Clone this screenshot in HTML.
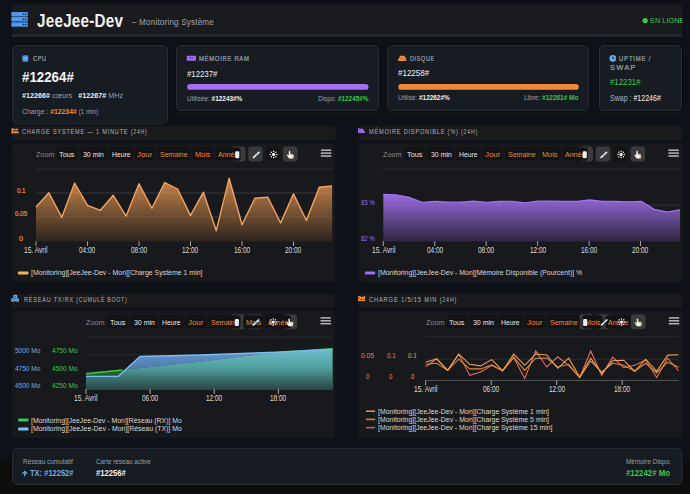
<!DOCTYPE html>
<html><head><meta charset="utf-8"><style>
html,body{margin:0;padding:0;}
html{background:#0e0d0c;}
body{width:690px;height:494px;position:relative;overflow:hidden;font-family:"Liberation Sans", sans-serif;background:linear-gradient(#0e1118 0,#0e1118 461px,#0e0d0c 461px);}
svg{position:absolute;left:0;top:0;}
.t{position:absolute;white-space:nowrap;line-height:12px;transform-origin:0 50%;}
b{font-weight:700;}
</style></head><body>
<svg width="690" height="494" viewBox="0 0 690 494">
<rect x="12" y="4.6" width="670.5" height="31.4" rx="4" fill="#1a1b1e" />
<rect x="12" y="34.6" width="670.5" height="2.0" rx="0" fill="#2a2d33" />
<rect x="176.5" y="105" width="202" height="10" rx="4.5" fill="#141519"/>
<rect x="387.5" y="105" width="201" height="10" rx="4.5" fill="#141519"/>
<rect x="599.5" y="105" width="82" height="10" rx="4.5" fill="#141519"/>
<rect x="11.5" y="44.5" width="157" height="80.5" rx="5.5" fill="none" stroke="#0a0c10" stroke-width="1"/>
<rect x="12.5" y="45.5" width="155" height="78.5" rx="4.5" fill="#171b22" stroke="#292d35" stroke-width="1"/>
<rect x="175.5" y="44.5" width="204" height="67" rx="5.5" fill="none" stroke="#0a0c10" stroke-width="1"/>
<rect x="176.5" y="45.5" width="202" height="65" rx="4.5" fill="#171b22" stroke="#292d35" stroke-width="1"/>
<rect x="386.5" y="44.5" width="203" height="67" rx="5.5" fill="none" stroke="#0a0c10" stroke-width="1"/>
<rect x="387.5" y="45.5" width="201" height="65" rx="4.5" fill="#171b22" stroke="#292d35" stroke-width="1"/>
<rect x="598.5" y="44.5" width="84" height="67" rx="5.5" fill="none" stroke="#0a0c10" stroke-width="1"/>
<rect x="599.5" y="45.5" width="82" height="65" rx="4.5" fill="#171b22" stroke="#292d35" stroke-width="1"/>
<rect x="12" y="126" width="323.5" height="14.300000000000011" rx="3" fill="#1a1a1d" />
<rect x="358.3" y="126" width="323.99999999999994" height="14.300000000000011" rx="3" fill="#1a1a1d" />
<rect x="12" y="293.8" width="323.3" height="14.199999999999989" rx="3" fill="#1a1a1d" />
<rect x="358.3" y="293.8" width="323.99999999999994" height="14.199999999999989" rx="3" fill="#1a1a1d" />
<rect x="12" y="143.4" width="323.3" height="138.70000000000002" rx="4" fill="#18191c" />
<rect x="358.6" y="143.6" width="323.9" height="138.70000000000002" rx="4" fill="#18191c" />
<rect x="12" y="310.6" width="323" height="127.69999999999999" rx="4" fill="#18191c" />
<rect x="358.3" y="311" width="324.40000000000003" height="127.60000000000002" rx="4" fill="#18191c" />
<rect x="11.5" y="447.5" width="671" height="37.5" rx="5.5" fill="none" stroke="#0a0c10" stroke-width="1"/>
<rect x="12.5" y="448.3" width="669.5" height="36.2" rx="4.5" fill="#171b22" stroke="#292d35" stroke-width="1"/>
<rect x="11.3" y="12.0" width="16.6" height="4.4" rx="0.8" fill="#4b94ea"/>
<rect x="12.2" y="13.7" width="9" height="0.7" fill="#7fb6f5" opacity="0.6"/>
<circle cx="23.6" cy="14.2" r="0.8" fill="#10233d"/>
<circle cx="25.8" cy="14.2" r="0.8" fill="#10233d"/>
<rect x="11.3" y="17.1" width="16.6" height="4.4" rx="0.8" fill="#4b94ea"/>
<rect x="12.2" y="18.8" width="9" height="0.7" fill="#7fb6f5" opacity="0.6"/>
<circle cx="23.6" cy="19.3" r="0.8" fill="#10233d"/>
<circle cx="25.8" cy="19.3" r="0.8" fill="#10233d"/>
<rect x="11.3" y="22.3" width="16.6" height="4.4" rx="0.8" fill="#4b94ea"/>
<rect x="12.2" y="24.0" width="9" height="0.7" fill="#7fb6f5" opacity="0.6"/>
<circle cx="23.6" cy="24.5" r="0.8" fill="#10233d"/>
<circle cx="25.8" cy="24.5" r="0.8" fill="#10233d"/>
<circle cx="645.2" cy="20.6" r="2.6" fill="#3ec84e"/>
<rect x="22.2" y="55.3" width="6.2" height="6.4" rx="1.6" fill="#4b94ea"/>
<rect x="23.8" y="57" width="3" height="3" fill="#8cbcf3" opacity="0.5"/>
<rect x="186.8" y="55.8" width="9.1" height="5" rx="0.5" fill="#a46ef0"/>
<rect x="188.8" y="57.3" width="5" height="1.2" fill="#5a3aa8" opacity="0.8"/>
<rect x="187.2" y="84" width="181.3" height="5.8" rx="2.9" fill="#a46ef0"/>
<path d="M400.2 55.8 H404.4 L406.3 59.2 V61 H398.2 V59.2 Z" fill="#f08a3a"/>
<rect x="399.4" y="58.4" width="5.6" height="0.8" fill="#a05a20" opacity="0.6"/>
<rect x="398.3" y="84" width="180.5" height="5.8" rx="2.9" fill="#f08a3a"/>
<circle cx="612.8" cy="58.4" r="3.3" fill="#6ab0f0"/>
<path d="M612.8 56.3 V58.6 H614.4" stroke="#10233d" stroke-width="0.9" fill="none"/>
<rect x="11.5" y="128.2" width="1.6" height="5.2" fill="#f08a3a"/>
<rect x="11.5" y="132.2" width="7.3" height="1.2" fill="#f08a3a"/>
<path d="M13.1 128.6 H14.1 L15.0 129.6 L16.1 128.5 L18.3 129.0 V130.29999999999998 H13.1 Z" fill="#f08a3a"/>
<rect x="13.1" y="131.1" width="5.2" height="1.1" fill="#f08a3a"/>
<rect x="358" y="128" width="1.3" height="5.1" fill="#9a6ae8"/>
<path d="M359.2 133.1 V128.5 L360.6 128.9 L361.9 128.3 L363.2 129.6 L364.1 130.2 L365.2 133.1 Z" fill="#9a6ae8"/>
<rect x="13.4" y="294.8" width="3.8" height="3.5" rx="1" fill="#6ab0f0"/>
<circle cx="15.3" cy="296.6" r="0.6" fill="#1a2a40"/>
<rect x="11.1" y="298.2" width="3.8" height="3.5" rx="1" fill="#6ab0f0"/>
<circle cx="13.0" cy="300.0" r="0.6" fill="#1a2a40"/>
<rect x="15.2" y="298.2" width="3.8" height="3.5" rx="1" fill="#6ab0f0"/>
<circle cx="17.099999999999998" cy="300.0" r="0.6" fill="#1a2a40"/>
<rect x="358.2" y="295.9" width="1.6" height="5.2" fill="#f08a3a"/>
<rect x="358.2" y="299.9" width="7.3" height="1.2" fill="#f08a3a"/>
<path d="M359.8 295.9 H360.7 V297.2 L361.9 296.7 H362.8 V297.4 L363.9 296.09999999999997 H365.0 V299.4 H359.8 Z" fill="#f08a3a"/>
<rect x="230.9" y="146.6" width="14.599999999999994" height="15.0" rx="3" fill="#3a3a3d" />
<rect x="248.2" y="146.6" width="14.600000000000023" height="15.0" rx="3" fill="#3a3a3d" />
<rect x="266" y="146.6" width="13.5" height="15.0" rx="3" fill="#141417" />
<rect x="283" y="146.6" width="14.600000000000023" height="15.0" rx="3" fill="#3a3a3d" />
<rect x="56.9" y="147.5" width="20.1" height="13.300000000000011" rx="3" fill="#131316" />
<rect x="81" y="147.5" width="25.5" height="13.300000000000011" rx="3" fill="#131316" />
<rect x="109.3" y="147.5" width="23.10000000000001" height="13.300000000000011" rx="3" fill="#131316" />
<rect x="135" y="147.5" width="20" height="13.300000000000011" rx="3" fill="#131316" />
<rect x="157.8" y="147.5" width="32.19999999999999" height="13.300000000000011" rx="3" fill="#131316" />
<rect x="192.7" y="147.5" width="20.100000000000023" height="13.300000000000011" rx="3" fill="#131316" />
<rect x="215.6" y="147.5" width="24.900000000000006" height="13.300000000000011" rx="3" fill="#131316" />
<rect x="578.4" y="146.6" width="14.600000000000023" height="15.0" rx="3" fill="#3a3a3d" />
<rect x="595.7" y="146.6" width="14.599999999999909" height="15.0" rx="3" fill="#3a3a3d" />
<rect x="613.5" y="146.6" width="13.5" height="15.0" rx="3" fill="#141417" />
<rect x="630.5" y="146.6" width="14.600000000000023" height="15.0" rx="3" fill="#3a3a3d" />
<rect x="404.29999999999995" y="147.5" width="20.100000000000023" height="13.300000000000011" rx="3" fill="#131316" />
<rect x="428.4" y="147.5" width="25.5" height="13.300000000000011" rx="3" fill="#131316" />
<rect x="456.7" y="147.5" width="23.099999999999966" height="13.300000000000011" rx="3" fill="#131316" />
<rect x="482.4" y="147.5" width="20.0" height="13.300000000000011" rx="3" fill="#131316" />
<rect x="505.2" y="147.5" width="32.19999999999999" height="13.300000000000011" rx="3" fill="#131316" />
<rect x="540.0999999999999" y="147.5" width="20.100000000000136" height="13.300000000000011" rx="3" fill="#131316" />
<rect x="563.0" y="147.5" width="24.899999999999977" height="13.300000000000011" rx="3" fill="#131316" />
<rect x="230.50000000000003" y="314.29999999999995" width="14.599999999999994" height="15.0" rx="3" fill="#3a3a3d" />
<rect x="247.8" y="314.29999999999995" width="14.600000000000023" height="15.0" rx="3" fill="#3a3a3d" />
<rect x="265.6" y="314.29999999999995" width="13.5" height="15.0" rx="3" fill="#141417" />
<rect x="282.6" y="314.29999999999995" width="14.600000000000023" height="15.0" rx="3" fill="#3a3a3d" />
<rect x="107.4" y="315.2" width="20.099999999999994" height="13.300000000000011" rx="3" fill="#131316" />
<rect x="131.5" y="315.2" width="25.5" height="13.300000000000011" rx="3" fill="#131316" />
<rect x="159.8" y="315.2" width="23.099999999999994" height="13.300000000000011" rx="3" fill="#131316" />
<rect x="185.5" y="315.2" width="20.0" height="13.300000000000011" rx="3" fill="#131316" />
<rect x="208.3" y="315.2" width="32.19999999999999" height="13.300000000000011" rx="3" fill="#131316" />
<rect x="243.2" y="315.2" width="20.100000000000023" height="13.300000000000011" rx="3" fill="#131316" />
<rect x="266.1" y="315.2" width="24.899999999999977" height="13.300000000000011" rx="3" fill="#131316" />
<rect x="578.8" y="314.29999999999995" width="14.600000000000023" height="15.0" rx="3" fill="#3a3a3d" />
<rect x="596.0999999999999" y="314.29999999999995" width="14.600000000000136" height="15.0" rx="3" fill="#3a3a3d" />
<rect x="613.9" y="314.29999999999995" width="13.5" height="15.0" rx="3" fill="#141417" />
<rect x="630.9" y="314.29999999999995" width="14.600000000000023" height="15.0" rx="3" fill="#3a3a3d" />
<rect x="446.7" y="315.2" width="20.100000000000023" height="13.300000000000011" rx="3" fill="#131316" />
<rect x="470.8" y="315.2" width="25.5" height="13.300000000000011" rx="3" fill="#131316" />
<rect x="499.1" y="315.2" width="23.100000000000023" height="13.300000000000011" rx="3" fill="#131316" />
<rect x="524.8" y="315.2" width="20.0" height="13.300000000000011" rx="3" fill="#131316" />
<rect x="547.6" y="315.2" width="32.19999999999993" height="13.300000000000011" rx="3" fill="#131316" />
<rect x="582.5" y="315.2" width="20.100000000000023" height="13.300000000000011" rx="3" fill="#131316" />
<rect x="605.4" y="315.2" width="24.899999999999977" height="13.300000000000011" rx="3" fill="#131316" />
<defs><linearGradient id="gOr" gradientUnits="userSpaceOnUse" x1="0" y1="172" x2="0" y2="241.4"><stop offset="0" stop-color="#dc9252"/><stop offset="1" stop-color="#2c231d"/></linearGradient><linearGradient id="gPu" x1="0" y1="0" x2="0" y2="1"><stop offset="0" stop-color="#9a6ae0"/><stop offset="1" stop-color="#2f2540"/></linearGradient><linearGradient id="gBl" gradientUnits="userSpaceOnUse" x1="0" y1="348" x2="0" y2="389"><stop offset="0" stop-color="#78b8f0"/><stop offset="1" stop-color="#3a5a78"/></linearGradient><linearGradient id="gGr" gradientUnits="userSpaceOnUse" x1="0" y1="348" x2="0" y2="389"><stop offset="0" stop-color="#42b85a"/><stop offset="1" stop-color="#22402a"/></linearGradient></defs>
<line x1="36" y1="169" x2="332.6" y2="169" stroke="#2b2b30" stroke-width="1"/>
<line x1="36" y1="193" x2="332.6" y2="193" stroke="#2b2b30" stroke-width="1"/>
<line x1="36" y1="217" x2="332.6" y2="217" stroke="#2b2b30" stroke-width="1"/>
<polygon points="36.00,207.00 48.88,192.80 61.75,217.40 74.62,183.00 87.50,205.40 100.38,210.30 113.25,195.30 126.12,216.20 139.00,183.70 151.88,208.30 164.75,182.50 177.62,189.00 190.50,215.60 203.38,192.20 216.25,230.80 229.12,178.10 242.00,224.70 254.88,198.30 267.75,197.10 280.62,223.00 293.50,193.90 306.38,220.50 319.25,187.20 332.12,186.00 332.1,241.4 36,241.4" fill="url(#gOr)"/>
<line x1="36" y1="193" x2="332.6" y2="193" stroke="#ffffff" stroke-opacity="0.07" stroke-width="1"/>
<line x1="36" y1="217" x2="332.6" y2="217" stroke="#ffffff" stroke-opacity="0.07" stroke-width="1"/>
<polyline points="36.00,207.00 48.88,192.80 61.75,217.40 74.62,183.00 87.50,205.40 100.38,210.30 113.25,195.30 126.12,216.20 139.00,183.70 151.88,208.30 164.75,182.50 177.62,189.00 190.50,215.60 203.38,192.20 216.25,230.80 229.12,178.10 242.00,224.70 254.88,198.30 267.75,197.10 280.62,223.00 293.50,193.90 306.38,220.50 319.25,187.20 332.12,186.00" fill="none" stroke="#f2a362" stroke-width="1.4" stroke-linejoin="round"/>
<line x1="36.0" y1="241.4" x2="36.0" y2="246" stroke="#c8c8c8" stroke-width="0.8"/>
<line x1="87.5" y1="241.4" x2="87.5" y2="246" stroke="#c8c8c8" stroke-width="0.8"/>
<line x1="139.0" y1="241.4" x2="139.0" y2="246" stroke="#c8c8c8" stroke-width="0.8"/>
<line x1="190.5" y1="241.4" x2="190.5" y2="246" stroke="#c8c8c8" stroke-width="0.8"/>
<line x1="242.0" y1="241.4" x2="242.0" y2="246" stroke="#c8c8c8" stroke-width="0.8"/>
<line x1="293.5" y1="241.4" x2="293.5" y2="246" stroke="#c8c8c8" stroke-width="0.8"/>
<rect x="17.9" y="271.6" width="10.6" height="2.8" rx="1" fill="#f2b060"/>
<line x1="383.3" y1="169" x2="680" y2="169" stroke="#2b2b30" stroke-width="1"/>
<line x1="383.3" y1="205.2" x2="680" y2="205.2" stroke="#2b2b30" stroke-width="1"/>
<polygon points="383.30,194.30 396.20,194.80 409.10,197.30 422.00,202.30 434.90,201.30 447.80,202.10 460.70,202.10 473.60,201.10 486.50,202.30 499.40,201.30 512.30,201.30 525.20,202.80 538.10,201.10 551.00,201.10 563.90,201.50 576.80,201.50 589.70,200.00 602.60,201.50 615.50,201.50 628.40,201.80 641.30,201.30 654.20,209.30 667.10,212.10 680.00,209.80 680,241.6 383.3,241.6" fill="url(#gPu)"/>
<line x1="383.3" y1="205.2" x2="680" y2="205.2" stroke="#ffffff" stroke-opacity="0.05" stroke-width="1"/>
<polyline points="383.30,194.30 396.20,194.80 409.10,197.30 422.00,202.30 434.90,201.30 447.80,202.10 460.70,202.10 473.60,201.10 486.50,202.30 499.40,201.30 512.30,201.30 525.20,202.80 538.10,201.10 551.00,201.10 563.90,201.50 576.80,201.50 589.70,200.00 602.60,201.50 615.50,201.50 628.40,201.80 641.30,201.30 654.20,209.30 667.10,212.10 680.00,209.80" fill="none" stroke="#a070f0" stroke-width="1.3"/>
<line x1="383.3" y1="241.2" x2="383.3" y2="246" stroke="#c8c8c8" stroke-width="0.8"/>
<line x1="434.75" y1="241.2" x2="434.75" y2="246" stroke="#c8c8c8" stroke-width="0.8"/>
<line x1="486.20000000000005" y1="241.2" x2="486.20000000000005" y2="246" stroke="#c8c8c8" stroke-width="0.8"/>
<line x1="537.6500000000001" y1="241.2" x2="537.6500000000001" y2="246" stroke="#c8c8c8" stroke-width="0.8"/>
<line x1="589.1" y1="241.2" x2="589.1" y2="246" stroke="#c8c8c8" stroke-width="0.8"/>
<line x1="640.55" y1="241.2" x2="640.55" y2="246" stroke="#c8c8c8" stroke-width="0.8"/>
<rect x="364.9" y="271.6" width="10.3" height="2.8" rx="1" fill="#a070f0"/>
<line x1="86" y1="337.2" x2="332.6" y2="337.2" stroke="#2b2b30" stroke-width="1"/>
<line x1="86" y1="354.8" x2="332.6" y2="354.8" stroke="#2b2b30" stroke-width="1"/>
<line x1="86" y1="371.8" x2="332.6" y2="371.8" stroke="#2b2b30" stroke-width="1"/>
<defs><clipPath id="cTX"><polygon points="86.00,376.40 118.40,376.20 140.00,356.50 200.00,355.00 277.00,352.20 332.60,349.40 332.6,389.4 86,389.4"/></clipPath><linearGradient id="gTeal" gradientUnits="userSpaceOnUse" x1="0" y1="349" x2="0" y2="389.4"><stop offset="0" stop-color="#6cbccc"/><stop offset="0.45" stop-color="#52a0a0"/><stop offset="1" stop-color="#2a4644"/></linearGradient><linearGradient id="gBlue2" gradientUnits="userSpaceOnUse" x1="0" y1="349" x2="0" y2="389.4"><stop offset="0" stop-color="#6698d4"/><stop offset="1" stop-color="#3a5a80"/></linearGradient></defs>
<polygon points="86.00,376.40 118.40,376.20 140.00,356.50 200.00,355.00 277.00,352.20 332.60,349.40 332.6,389.4 86,389.4" fill="url(#gBlue2)"/>
<polygon points="86.00,373.70 122.50,369.90 200.00,361.70 277.00,352.30 332.60,348.60 332.6,389.4 86,389.4" fill="#25602a"/>
<polygon points="86.00,373.70 122.50,369.90 200.00,361.70 277.00,352.30 332.60,348.60 332.6,389.4 86,389.4" fill="url(#gTeal)" clip-path="url(#cTX)"/>
<polyline points="86,373.7 122.5,369.9" fill="none" stroke="#3ec84e" stroke-width="1.5"/>
<polyline points="277,352.3 332.6,348.6" fill="none" stroke="#3ec84e" stroke-width="1.2"/>
<polyline points="86.00,376.40 118.40,376.20 140.00,356.50 200.00,355.00 277.00,352.20 332.60,349.40" fill="none" stroke="#7cbcf4" stroke-width="1.4"/>
<line x1="86.0" y1="389.1" x2="86.0" y2="394" stroke="#c8c8c8" stroke-width="0.8"/>
<line x1="150.13" y1="389.1" x2="150.13" y2="394" stroke="#c8c8c8" stroke-width="0.8"/>
<line x1="214.26" y1="389.1" x2="214.26" y2="394" stroke="#c8c8c8" stroke-width="0.8"/>
<line x1="278.39" y1="389.1" x2="278.39" y2="394" stroke="#c8c8c8" stroke-width="0.8"/>
<rect x="18.1" y="418.6" width="10.4" height="2.8" rx="1" fill="#3ec84e"/>
<rect x="18.1" y="427.6" width="10.4" height="2.8" rx="1" fill="#7ac0f8"/>
<line x1="425.7" y1="336.8" x2="678.7" y2="336.8" stroke="#2b2b30" stroke-width="1"/>
<line x1="425.7" y1="359.2" x2="678.7" y2="359.2" stroke="#2b2b30" stroke-width="1"/>
<line x1="425.7" y1="380.4" x2="678.7" y2="380.4" stroke="#55555a" stroke-width="1"/>
<polyline points="425.70,366.90 436.70,358.80 447.70,370.40 458.70,354.10 469.70,375.40 480.70,372.00 491.70,365.30 502.70,370.70 513.70,357.60 524.70,378.50 535.70,351.00 546.70,367.00 557.70,356.80 568.70,365.30 579.70,377.50 590.70,351.00 601.70,375.40 612.70,357.20 623.70,367.70 634.70,365.30 645.70,360.00 656.70,377.50 667.70,358.20 678.70,371.00" fill="none" stroke="#e0705e" stroke-width="1.1"/>
<polyline points="425.70,364.30 436.70,363.30 447.70,370.40 458.70,359.20 469.70,368.90 480.70,368.90 491.70,364.90 502.70,370.70 513.70,357.20 524.70,370.40 535.70,358.20 546.70,358.00 557.70,367.00 568.70,364.30 579.70,377.50 590.70,361.00 601.70,372.00 612.70,363.30 623.70,365.30 634.70,371.00 645.70,363.30 656.70,373.00 667.70,362.20 678.70,367.30" fill="none" stroke="#e0893a" stroke-width="1.1"/>
<polyline points="425.70,362.20 436.70,358.80 447.70,370.40 458.70,354.10 469.70,364.30 480.70,365.90 491.70,359.60 502.70,370.70 513.70,354.10 524.70,365.30 535.70,354.00 546.70,355.00 557.70,368.30 568.70,358.20 579.70,377.00 590.70,358.20 601.70,373.40 612.70,360.80 623.70,360.20 634.70,371.40 645.70,359.20 656.70,371.40 667.70,355.10 678.70,354.70" fill="none" stroke="#f0a050" stroke-width="1.1"/>
<line x1="425.7" y1="380.4" x2="425.7" y2="385" stroke="#c8c8c8" stroke-width="0.8"/>
<line x1="491.2" y1="380.4" x2="491.2" y2="385" stroke="#c8c8c8" stroke-width="0.8"/>
<line x1="556.7" y1="380.4" x2="556.7" y2="385" stroke="#c8c8c8" stroke-width="0.8"/>
<line x1="622.2" y1="380.4" x2="622.2" y2="385" stroke="#c8c8c8" stroke-width="0.8"/>
<rect x="366" y="410.4" width="9.2" height="1.6" fill="#d8944a"/>
<rect x="366" y="418.59999999999997" width="9.2" height="1.6" fill="#d8862e"/>
<rect x="366" y="426.8" width="9.2" height="1.6" fill="#b8605a"/>
<path d="M21.9 473.6 L24.8 470.4 L27.7 473.6 L26.9 474.3 L25.5 472.8 V476.2 H24.1 V472.8 L22.7 474.3 Z" fill="#6ab0f0"/>
</svg>
<span class="t" id="t0" style="left:37.20px;top:14.95px;font-size:18px;font-weight:700;color:#f2f2f2;transform:scaleX(0.8453);letter-spacing:0.3px">JeeJee-Dev</span>
<span class="t" id="t1" style="left:132.00px;top:16.24px;font-size:9.6px;font-weight:400;color:#a0a4ac;transform:scaleX(0.8473);letter-spacing:0.2px">– Monitoring Système</span>
<span class="t" id="t2" style="left:649.80px;top:14.87px;font-size:8px;font-weight:400;color:#3ec84e;transform:scaleX(0.9212);">EN LIGNE</span>
<span class="t" id="t3" style="left:32.70px;top:53.11px;font-size:7px;font-weight:400;color:#9aa0a8;transform:scaleX(0.7971);-webkit-text-stroke:0.22px #9aa0a8;letter-spacing:0.8px">CPU</span>
<span class="t" id="t4" style="left:22.00px;top:71.22px;font-size:14px;font-weight:700;color:#f4f4f4;transform:scaleX(0.9502);">#12264#</span>
<span class="t" id="t5" style="left:22.00px;top:89.99px;font-size:7.5px;font-weight:400;color:#9aa0a8;transform:scaleX(0.9573);"><b style="color:#f0f0f0">#12266#</b> cœurs &nbsp; <b style="color:#f0f0f0">#12267#</b> MHz</span>
<span class="t" id="t6" style="left:22.00px;top:106.10px;font-size:7.5px;font-weight:400;color:#9aa0a8;transform:scaleX(0.9122);">Charge : <b style="color:#f08a3a">#12234#</b> <span style="font-size:6.8px">(1 min)</span></span>
<span class="t" id="t7" style="left:199.30px;top:53.11px;font-size:7px;font-weight:400;color:#9aa0a8;transform:scaleX(0.8469);-webkit-text-stroke:0.22px #9aa0a8;letter-spacing:0.8px">MÉMOIRE RAM</span>
<span class="t" id="t8" style="left:187.20px;top:67.53px;font-size:9px;font-weight:400;color:#f0f0f0;transform:scaleX(0.8646);">#12237#</span>
<span class="t" id="t9" style="left:187.20px;top:92.51px;font-size:7px;font-weight:400;color:#9aa0a8;transform:scaleX(0.9167);">Utilisée: <b style="color:#f4f4f4">#12243#%</b></span>
<span class="t" id="t10" style="left:318.00px;top:92.51px;font-size:7px;font-weight:400;color:#9aa0a8;transform:scaleX(0.9135);">Dispo: <b style="color:#3ec84e">#12245#%</b></span>
<span class="t" id="t11" style="left:410.20px;top:53.11px;font-size:7px;font-weight:400;color:#9aa0a8;transform:scaleX(0.7838);-webkit-text-stroke:0.22px #9aa0a8;letter-spacing:0.8px">DISQUE</span>
<span class="t" id="t12" style="left:398.30px;top:67.23px;font-size:9px;font-weight:400;color:#f0f0f0;transform:scaleX(0.8902);">#12258#</span>
<span class="t" id="t13" style="left:398.30px;top:92.32px;font-size:7px;font-weight:400;color:#9aa0a8;transform:scaleX(0.9161);">Utilisé: <b style="color:#f4f4f4">#12262#%</b></span>
<span class="t" id="t14" style="left:524.30px;top:92.32px;font-size:7px;font-weight:400;color:#9aa0a8;transform:scaleX(0.9272);">Libre: <b style="color:#3ec84e">#12261# Mo</b></span>
<span class="t" id="t15" style="left:619.30px;top:53.21px;font-size:7px;font-weight:400;color:#9aa0a8;transform:scaleX(0.8424);-webkit-text-stroke:0.22px #9aa0a8;letter-spacing:1.0px">UPTIME /</span>
<span class="t" id="t16" style="left:609.50px;top:62.01px;font-size:7px;font-weight:400;color:#9aa0a8;transform:scaleX(1.0534);-webkit-text-stroke:0.22px #9aa0a8;letter-spacing:1.2px">SWAP</span>
<span class="t" id="t17" style="left:609.50px;top:76.85px;font-size:8.2px;font-weight:400;color:#3ec84e;transform:scaleX(0.9569);">#12231#</span>
<span class="t" id="t18" style="left:609.50px;top:93.05px;font-size:8.2px;font-weight:400;color:#b0b4ba;transform:scaleX(0.8583);">Swap : <b style="color:#f0f0f0;font-weight:400">#12246#</b></span>
<span class="t" id="t19" style="left:22.00px;top:125.82px;font-size:7px;font-weight:400;color:#b0b4ba;transform:scaleX(0.7943);letter-spacing:1.0px">CHARGE SYSTÈME — 1 MINUTE <span style="font-size:6.5px">(24H)</span></span>
<span class="t" id="t20" style="left:369.00px;top:126.11px;font-size:7px;font-weight:400;color:#b0b4ba;transform:scaleX(0.7988);letter-spacing:1.0px">MÉMOIRE DISPONIBLE (%) <span style="font-size:6.5px">(24H)</span></span>
<span class="t" id="t21" style="left:23.50px;top:293.71px;font-size:7px;font-weight:400;color:#b0b4ba;transform:scaleX(0.7890);letter-spacing:1.0px">RÉSEAU TX/RX <span style="font-size:6.5px">(CUMULÉ BOOT)</span></span>
<span class="t" id="t22" style="left:369.00px;top:293.71px;font-size:7px;font-weight:400;color:#b0b4ba;transform:scaleX(0.8217);letter-spacing:1.0px">CHARGE 1/5/15 MIN <span style="font-size:6.5px">(24H)</span></span>
<span class="t" id="t23" style="left:35.90px;top:149.09px;font-size:7.8px;font-weight:400;color:#8a8a8e;transform:scaleX(0.9229);">Zoom</span>
<span class="t" id="t24" style="left:59.20px;top:149.22px;font-size:8.1px;font-weight:400;color:#e8e8e8;transform:scaleX(0.9059);">Tous</span>
<span class="t" id="t25" style="left:83.30px;top:149.22px;font-size:8.1px;font-weight:400;color:#e8e8e8;transform:scaleX(0.8602);">30 min</span>
<span class="t" id="t26" style="left:111.60px;top:149.22px;font-size:8.1px;font-weight:400;color:#e8e8e8;transform:scaleX(0.8391);">Heure</span>
<span class="t" id="t27" style="left:137.30px;top:149.22px;font-size:8.1px;font-weight:400;color:#e8893a;transform:scaleX(0.9778);">Jour</span>
<span class="t" id="t28" style="left:160.10px;top:149.22px;font-size:8.1px;font-weight:400;color:#e8893a;transform:scaleX(0.8638);">Semaine</span>
<span class="t" id="t29" style="left:195.00px;top:149.22px;font-size:8.1px;font-weight:400;color:#e8893a;transform:scaleX(0.9068);">Mois</span>
<span class="t" id="t30" style="left:217.90px;top:149.22px;font-size:8.1px;font-weight:400;color:#e8893a;transform:scaleX(0.8673);">Année</span>
<span class="t" id="t31" style="left:383.30px;top:149.09px;font-size:7.8px;font-weight:400;color:#8a8a8e;transform:scaleX(0.9229);">Zoom</span>
<span class="t" id="t32" style="left:406.60px;top:149.22px;font-size:8.1px;font-weight:400;color:#e8e8e8;transform:scaleX(0.9059);">Tous</span>
<span class="t" id="t33" style="left:430.70px;top:149.22px;font-size:8.1px;font-weight:400;color:#e8e8e8;transform:scaleX(0.8602);">30 min</span>
<span class="t" id="t34" style="left:459.00px;top:149.22px;font-size:8.1px;font-weight:400;color:#e8e8e8;transform:scaleX(0.8391);">Heure</span>
<span class="t" id="t35" style="left:484.70px;top:149.22px;font-size:8.1px;font-weight:400;color:#e8893a;transform:scaleX(0.9778);">Jour</span>
<span class="t" id="t36" style="left:507.50px;top:149.22px;font-size:8.1px;font-weight:400;color:#e8893a;transform:scaleX(0.8638);">Semaine</span>
<span class="t" id="t37" style="left:542.40px;top:149.22px;font-size:8.1px;font-weight:400;color:#e8893a;transform:scaleX(0.9068);">Mois</span>
<span class="t" id="t38" style="left:565.30px;top:149.22px;font-size:8.1px;font-weight:400;color:#e8893a;transform:scaleX(0.8673);">Année</span>
<span class="t" id="t39" style="left:86.40px;top:316.80px;font-size:7.8px;font-weight:400;color:#8a8a8e;transform:scaleX(0.9229);">Zoom</span>
<span class="t" id="t40" style="left:109.70px;top:316.91px;font-size:8.1px;font-weight:400;color:#e8e8e8;transform:scaleX(0.9059);">Tous</span>
<span class="t" id="t41" style="left:133.80px;top:316.91px;font-size:8.1px;font-weight:400;color:#e8e8e8;transform:scaleX(0.8602);">30 min</span>
<span class="t" id="t42" style="left:162.10px;top:316.91px;font-size:8.1px;font-weight:400;color:#e8e8e8;transform:scaleX(0.8391);">Heure</span>
<span class="t" id="t43" style="left:187.80px;top:316.91px;font-size:8.1px;font-weight:400;color:#e8893a;transform:scaleX(0.9778);">Jour</span>
<span class="t" id="t44" style="left:210.60px;top:316.91px;font-size:8.1px;font-weight:400;color:#e8893a;transform:scaleX(0.8638);">Semaine</span>
<span class="t" id="t45" style="left:245.50px;top:316.91px;font-size:8.1px;font-weight:400;color:#e8893a;transform:scaleX(0.9068);">Mois</span>
<span class="t" id="t46" style="left:268.40px;top:316.91px;font-size:8.1px;font-weight:400;color:#e8893a;transform:scaleX(0.8673);">Année</span>
<span class="t" id="t47" style="left:425.70px;top:316.80px;font-size:7.8px;font-weight:400;color:#8a8a8e;transform:scaleX(0.9229);">Zoom</span>
<span class="t" id="t48" style="left:449.00px;top:316.91px;font-size:8.1px;font-weight:400;color:#e8e8e8;transform:scaleX(0.9059);">Tous</span>
<span class="t" id="t49" style="left:473.10px;top:316.91px;font-size:8.1px;font-weight:400;color:#e8e8e8;transform:scaleX(0.8602);">30 min</span>
<span class="t" id="t50" style="left:501.40px;top:316.91px;font-size:8.1px;font-weight:400;color:#e8e8e8;transform:scaleX(0.8391);">Heure</span>
<span class="t" id="t51" style="left:527.10px;top:316.91px;font-size:8.1px;font-weight:400;color:#e8893a;transform:scaleX(0.9778);">Jour</span>
<span class="t" id="t52" style="left:549.90px;top:316.91px;font-size:8.1px;font-weight:400;color:#e8893a;transform:scaleX(0.8638);">Semaine</span>
<span class="t" id="t53" style="left:584.80px;top:316.91px;font-size:8.1px;font-weight:400;color:#e8893a;transform:scaleX(0.9068);">Mois</span>
<span class="t" id="t54" style="left:607.70px;top:316.91px;font-size:8.1px;font-weight:400;color:#e8893a;transform:scaleX(0.8673);">Année</span>
<span class="t" id="t55" style="left:24.30px;top:244.85px;font-size:8.2px;font-weight:400;color:#dcdcdc;transform:scaleX(0.8073);">15. Avril</span>
<span class="t" id="t56" style="left:79.40px;top:244.85px;font-size:8.2px;font-weight:400;color:#dcdcdc;transform:scaleX(0.7902);">04:00</span>
<span class="t" id="t57" style="left:130.90px;top:244.85px;font-size:8.2px;font-weight:400;color:#dcdcdc;transform:scaleX(0.7902);">08:00</span>
<span class="t" id="t58" style="left:182.40px;top:244.85px;font-size:8.2px;font-weight:400;color:#dcdcdc;transform:scaleX(0.7902);">12:00</span>
<span class="t" id="t59" style="left:233.90px;top:244.85px;font-size:8.2px;font-weight:400;color:#dcdcdc;transform:scaleX(0.7902);">16:00</span>
<span class="t" id="t60" style="left:285.40px;top:244.85px;font-size:8.2px;font-weight:400;color:#dcdcdc;transform:scaleX(0.7902);">20:00</span>
<span class="t" id="t61" style="left:16.60px;top:184.56px;font-size:7.4px;font-weight:400;color:#e8903c;transform:scaleX(0.8267);-webkit-text-stroke:0.22px #e8903c;">0.1</span>
<span class="t" id="t62" style="left:15.00px;top:208.25px;font-size:7.4px;font-weight:400;color:#e8903c;transform:scaleX(0.8408);-webkit-text-stroke:0.22px #e8903c;">0.05</span>
<span class="t" id="t63" style="left:19.20px;top:232.56px;font-size:7.4px;font-weight:400;color:#e8903c;transform:scaleX(0.9697);-webkit-text-stroke:0.22px #e8903c;">0</span>
<span class="t" id="t64" style="left:31.00px;top:267.05px;font-size:7.8px;font-weight:400;color:#d8d8d8;transform:scaleX(0.8913);">[Monitoring][JeeJee-Dev - Mon][Charge Système 1 min]</span>
<span class="t" id="t65" style="left:371.60px;top:244.85px;font-size:8.2px;font-weight:400;color:#dcdcdc;transform:scaleX(0.8073);">15. Avril</span>
<span class="t" id="t66" style="left:426.65px;top:244.85px;font-size:8.2px;font-weight:400;color:#dcdcdc;transform:scaleX(0.7902);">04:00</span>
<span class="t" id="t67" style="left:478.10px;top:244.85px;font-size:8.2px;font-weight:400;color:#dcdcdc;transform:scaleX(0.7902);">08:00</span>
<span class="t" id="t68" style="left:529.55px;top:244.85px;font-size:8.2px;font-weight:400;color:#dcdcdc;transform:scaleX(0.7902);">12:00</span>
<span class="t" id="t69" style="left:581.00px;top:244.85px;font-size:8.2px;font-weight:400;color:#dcdcdc;transform:scaleX(0.7902);">16:00</span>
<span class="t" id="t70" style="left:632.45px;top:244.85px;font-size:8.2px;font-weight:400;color:#dcdcdc;transform:scaleX(0.7902);">20:00</span>
<span class="t" id="t71" style="left:361.00px;top:196.89px;font-size:7.5px;font-weight:400;color:#a070f0;transform:scaleX(0.8007);">83 %</span>
<span class="t" id="t72" style="left:361.00px;top:232.60px;font-size:7.5px;font-weight:400;color:#a070f0;transform:scaleX(0.8007);">82 %</span>
<span class="t" id="t73" style="left:378.40px;top:267.05px;font-size:7.8px;font-weight:400;color:#d8d8d8;transform:scaleX(0.8895);">[Monitoring][JeeJee-Dev - Mon][Mémoire Disponible (Pourcent)] %</span>
<span class="t" id="t74" style="left:74.30px;top:392.55px;font-size:8.2px;font-weight:400;color:#dcdcdc;transform:scaleX(0.8073);">15. Avril</span>
<span class="t" id="t75" style="left:142.03px;top:392.55px;font-size:8.2px;font-weight:400;color:#dcdcdc;transform:scaleX(0.7902);">06:00</span>
<span class="t" id="t76" style="left:206.16px;top:392.55px;font-size:8.2px;font-weight:400;color:#dcdcdc;transform:scaleX(0.7902);">12:00</span>
<span class="t" id="t77" style="left:270.29px;top:392.55px;font-size:8.2px;font-weight:400;color:#dcdcdc;transform:scaleX(0.7902);">18:00</span>
<span class="t" id="t78" style="left:14.50px;top:345.25px;font-size:7.4px;font-weight:400;color:#6ab0f0;transform:scaleX(0.8795);">5000 Mo</span>
<span class="t" id="t79" style="left:14.50px;top:362.85px;font-size:7.4px;font-weight:400;color:#6ab0f0;transform:scaleX(0.8795);">4750 Mo</span>
<span class="t" id="t80" style="left:14.50px;top:380.06px;font-size:7.4px;font-weight:400;color:#6ab0f0;transform:scaleX(0.8795);">4500 Mo</span>
<span class="t" id="t81" style="left:52.00px;top:345.25px;font-size:7.4px;font-weight:400;color:#3ec84e;transform:scaleX(0.8900);">4750 Mo</span>
<span class="t" id="t82" style="left:52.00px;top:362.85px;font-size:7.4px;font-weight:400;color:#3ec84e;transform:scaleX(0.8900);">4500 Mo</span>
<span class="t" id="t83" style="left:52.00px;top:380.06px;font-size:7.4px;font-weight:400;color:#3ec84e;transform:scaleX(0.8900);">4250 Mo</span>
<span class="t" id="t84" style="left:31.00px;top:414.90px;font-size:7.8px;font-weight:400;color:#d8d8d8;transform:scaleX(0.8810);">[Monitoring][JeeJee-Dev - Mon][Réseau (RX)] Mo</span>
<span class="t" id="t85" style="left:31.00px;top:423.21px;font-size:7.8px;font-weight:400;color:#d8d8d8;transform:scaleX(0.8855);">[Monitoring][JeeJee-Dev - Mon][Réseau (TX)] Mo</span>
<span class="t" id="t86" style="left:414.00px;top:384.24px;font-size:8.2px;font-weight:400;color:#dcdcdc;transform:scaleX(0.8073);">15. Avril</span>
<span class="t" id="t87" style="left:483.10px;top:384.24px;font-size:8.2px;font-weight:400;color:#dcdcdc;transform:scaleX(0.7902);">06:00</span>
<span class="t" id="t88" style="left:548.60px;top:384.24px;font-size:8.2px;font-weight:400;color:#dcdcdc;transform:scaleX(0.7902);">12:00</span>
<span class="t" id="t89" style="left:614.10px;top:384.24px;font-size:8.2px;font-weight:400;color:#dcdcdc;transform:scaleX(0.7902);">18:00</span>
<span class="t" id="t90" style="left:361.20px;top:349.99px;font-size:7.5px;font-weight:400;color:#f07e6a;transform:scaleX(0.8898);">0.05</span>
<span class="t" id="t91" style="left:386.50px;top:349.99px;font-size:7.5px;font-weight:400;color:#e8893a;transform:scaleX(0.8240);">0.1</span>
<span class="t" id="t92" style="left:408.00px;top:349.99px;font-size:7.5px;font-weight:400;color:#f0a050;transform:scaleX(0.8240);">0.1</span>
<span class="t" id="t93" style="left:366.00px;top:371.39px;font-size:7.5px;font-weight:400;color:#f07e6a;transform:scaleX(0.8150);">0</span>
<span class="t" id="t94" style="left:389.40px;top:371.39px;font-size:7.5px;font-weight:400;color:#e8893a;transform:scaleX(0.8150);">0</span>
<span class="t" id="t95" style="left:410.60px;top:371.39px;font-size:7.5px;font-weight:400;color:#f0a050;transform:scaleX(0.8150);">0</span>
<span class="t" id="t96" style="left:378.00px;top:406.00px;font-size:7.8px;font-weight:400;color:#d8d8d8;transform:scaleX(0.8887);">[Monitoring][JeeJee-Dev - Mon][Charge Système 1 min]</span>
<span class="t" id="t97" style="left:378.00px;top:414.21px;font-size:7.8px;font-weight:400;color:#d8d8d8;transform:scaleX(0.8887);">[Monitoring][JeeJee-Dev - Mon][Charge Système 5 min]</span>
<span class="t" id="t98" style="left:378.00px;top:422.40px;font-size:7.8px;font-weight:400;color:#d8d8d8;transform:scaleX(0.8869);">[Monitoring][JeeJee-Dev - Mon][Charge Système 15 min]</span>
<span class="t" id="t99" style="left:22.80px;top:456.21px;font-size:7px;font-weight:400;color:#9aa0a8;transform:scaleX(0.9206);">Réseau cumulatif</span>
<span class="t" id="t100" style="left:29.50px;top:466.85px;font-size:8.5px;font-weight:700;color:#6ab0f0;transform:scaleX(0.8849);">TX: #12252#</span>
<span class="t" id="t101" style="left:96.30px;top:456.21px;font-size:7px;font-weight:400;color:#9aa0a8;transform:scaleX(0.9011);">Carte réseau active</span>
<span class="t" id="t102" style="left:96.30px;top:466.85px;font-size:8.5px;font-weight:700;color:#f0f0f0;transform:scaleX(0.8975);">#12256#</span>
<span class="t" id="t103" style="left:626.00px;top:456.21px;font-size:7px;font-weight:400;color:#9aa0a8;transform:scaleX(0.9181);">Mémoire Dispo.</span>
<span class="t" id="t104" style="left:626.00px;top:466.85px;font-size:8.5px;font-weight:700;color:#3ec84e;transform:scaleX(0.9218);">#12242# Mo</span>
<svg width="690" height="494" viewBox="0 0 690 494">
<rect x="235.2" y="151.2" width="4.1" height="7.1" rx="1" fill="#e8eef4"/>
<path d="M253.6 157.3 L259 152.3" stroke="#e8eef4" stroke-width="1.7" stroke-linecap="round"/>
<path d="M255.6 155.4 L257.1 154.1" stroke="#7aa8dc" stroke-width="1.2"/>
<circle cx="273.6" cy="154.4" r="1.6" fill="#f4f4f4"/>
<circle cx="276.80" cy="154.40" r="0.75" fill="#eeeeee"/>
<circle cx="275.86" cy="156.66" r="0.75" fill="#eeeeee"/>
<circle cx="273.60" cy="157.60" r="0.75" fill="#eeeeee"/>
<circle cx="271.34" cy="156.66" r="0.75" fill="#eeeeee"/>
<circle cx="270.40" cy="154.40" r="0.75" fill="#eeeeee"/>
<circle cx="271.34" cy="152.14" r="0.75" fill="#eeeeee"/>
<circle cx="273.60" cy="151.20" r="0.75" fill="#eeeeee"/>
<circle cx="275.86" cy="152.14" r="0.75" fill="#eeeeee"/>
<path d="M289.0 158.5 L286.79999999999995 155.1 Q287.0 154.3 287.9 154.7 L288.79999999999995 155.5 V151.4 Q289.5 150.3 290.29999999999995 151.4 V153.8 L293.0 154.4 Q293.79999999999995 154.7 293.7 155.7 L293.2 158.5 Z" fill="#f6f2ec"/>
<path d="M290.59999999999997 154.7 L293.2 155.3 L292.79999999999995 158.1" stroke="#d9b08a" stroke-width="0.8" fill="none"/>
<rect x="320.9" y="149.45" width="10.4" height="1.5" fill="#b8b8bc"/>
<rect x="320.9" y="152.35" width="10.4" height="1.5" fill="#b8b8bc"/>
<rect x="320.9" y="155.25" width="10.4" height="1.5" fill="#b8b8bc"/>
<rect x="582.7" y="151.2" width="4.1" height="7.1" rx="1" fill="#e8eef4"/>
<path d="M601.1 157.3 L606.5 152.3" stroke="#e8eef4" stroke-width="1.7" stroke-linecap="round"/>
<path d="M603.1 155.4 L604.6 154.1" stroke="#7aa8dc" stroke-width="1.2"/>
<circle cx="621.1" cy="154.4" r="1.6" fill="#f4f4f4"/>
<circle cx="624.30" cy="154.40" r="0.75" fill="#eeeeee"/>
<circle cx="623.36" cy="156.66" r="0.75" fill="#eeeeee"/>
<circle cx="621.10" cy="157.60" r="0.75" fill="#eeeeee"/>
<circle cx="618.84" cy="156.66" r="0.75" fill="#eeeeee"/>
<circle cx="617.90" cy="154.40" r="0.75" fill="#eeeeee"/>
<circle cx="618.84" cy="152.14" r="0.75" fill="#eeeeee"/>
<circle cx="621.10" cy="151.20" r="0.75" fill="#eeeeee"/>
<circle cx="623.36" cy="152.14" r="0.75" fill="#eeeeee"/>
<path d="M636.5 158.5 L634.3 155.1 Q634.5 154.3 635.4 154.7 L636.3 155.5 V151.4 Q637.0 150.3 637.8 151.4 V153.8 L640.5 154.4 Q641.3 154.7 641.1999999999999 155.7 L640.6999999999999 158.5 Z" fill="#f6f2ec"/>
<path d="M638.1 154.7 L640.6999999999999 155.3 L640.3 158.1" stroke="#d9b08a" stroke-width="0.8" fill="none"/>
<rect x="668.4" y="149.45" width="10.4" height="1.5" fill="#b8b8bc"/>
<rect x="668.4" y="152.35" width="10.4" height="1.5" fill="#b8b8bc"/>
<rect x="668.4" y="155.25" width="10.4" height="1.5" fill="#b8b8bc"/>
<rect x="234.8" y="318.9" width="4.1" height="7.1" rx="1" fill="#e8eef4"/>
<path d="M253.20000000000002 325.0 L258.6 320.0" stroke="#e8eef4" stroke-width="1.7" stroke-linecap="round"/>
<path d="M255.20000000000002 323.1 L256.70000000000005 321.79999999999995" stroke="#7aa8dc" stroke-width="1.2"/>
<circle cx="273.20000000000005" cy="322.1" r="1.6" fill="#f4f4f4"/>
<circle cx="276.40" cy="322.10" r="0.75" fill="#eeeeee"/>
<circle cx="275.46" cy="324.36" r="0.75" fill="#eeeeee"/>
<circle cx="273.20" cy="325.30" r="0.75" fill="#eeeeee"/>
<circle cx="270.94" cy="324.36" r="0.75" fill="#eeeeee"/>
<circle cx="270.00" cy="322.10" r="0.75" fill="#eeeeee"/>
<circle cx="270.94" cy="319.84" r="0.75" fill="#eeeeee"/>
<circle cx="273.20" cy="318.90" r="0.75" fill="#eeeeee"/>
<circle cx="275.46" cy="319.84" r="0.75" fill="#eeeeee"/>
<path d="M288.6 326.2 L286.4 322.8 Q286.6 322.0 287.5 322.4 L288.4 323.2 V319.09999999999997 Q289.1 318.0 289.9 319.09999999999997 V321.5 L292.6 322.09999999999997 Q293.4 322.4 293.3 323.4 L292.8 326.2 Z" fill="#f6f2ec"/>
<path d="M290.2 322.4 L292.8 323.0 L292.4 325.8" stroke="#d9b08a" stroke-width="0.8" fill="none"/>
<rect x="320.5" y="317.15" width="10.4" height="1.5" fill="#b8b8bc"/>
<rect x="320.5" y="320.04999999999995" width="10.4" height="1.5" fill="#b8b8bc"/>
<rect x="320.5" y="322.95" width="10.4" height="1.5" fill="#b8b8bc"/>
<rect x="583.0999999999999" y="318.9" width="4.1" height="7.1" rx="1" fill="#e8eef4"/>
<path d="M601.5 325.0 L606.9 320.0" stroke="#e8eef4" stroke-width="1.7" stroke-linecap="round"/>
<path d="M603.5 323.1 L605.0 321.79999999999995" stroke="#7aa8dc" stroke-width="1.2"/>
<circle cx="621.5" cy="322.1" r="1.6" fill="#f4f4f4"/>
<circle cx="624.70" cy="322.10" r="0.75" fill="#eeeeee"/>
<circle cx="623.76" cy="324.36" r="0.75" fill="#eeeeee"/>
<circle cx="621.50" cy="325.30" r="0.75" fill="#eeeeee"/>
<circle cx="619.24" cy="324.36" r="0.75" fill="#eeeeee"/>
<circle cx="618.30" cy="322.10" r="0.75" fill="#eeeeee"/>
<circle cx="619.24" cy="319.84" r="0.75" fill="#eeeeee"/>
<circle cx="621.50" cy="318.90" r="0.75" fill="#eeeeee"/>
<circle cx="623.76" cy="319.84" r="0.75" fill="#eeeeee"/>
<path d="M636.9 326.2 L634.6999999999999 322.8 Q634.9 322.0 635.8 322.4 L636.6999999999999 323.2 V319.09999999999997 Q637.4 318.0 638.1999999999999 319.09999999999997 V321.5 L640.9 322.09999999999997 Q641.6999999999999 322.4 641.5999999999999 323.4 L641.0999999999999 326.2 Z" fill="#f6f2ec"/>
<path d="M638.5 322.4 L641.0999999999999 323.0 L640.6999999999999 325.8" stroke="#d9b08a" stroke-width="0.8" fill="none"/>
<rect x="668.8" y="317.15" width="10.4" height="1.5" fill="#b8b8bc"/>
<rect x="668.8" y="320.04999999999995" width="10.4" height="1.5" fill="#b8b8bc"/>
<rect x="668.8" y="322.95" width="10.4" height="1.5" fill="#b8b8bc"/>
<rect x="682.5" y="0" width="8" height="40" fill="#0e1118"/>
</svg>
</body></html>
